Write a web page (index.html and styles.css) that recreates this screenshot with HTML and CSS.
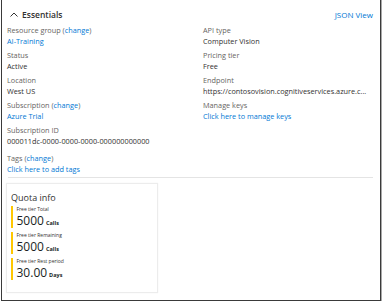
FILE: index.html
```html
<!DOCTYPE html>
<html>
<head>
<meta charset="utf-8">
<link rel="stylesheet" href="styles.css">
</head>
<body>
<div class="frame">
  <div class="header">
    <div class="title">
      <svg class="chev" width="8" height="5" viewBox="0 0 8 5"><path d="M0.5 4.5 L4 1 L7.5 4.5" fill="none" stroke="#333" stroke-width="1"/></svg>
      <span>Essentials</span>
    </div>
    <a class="link">JSON View</a>
  </div>
  <div class="grid">
    <div class="col">
      <div class="item"><div class="label">Resource group (<a class="link">change</a>)</div><div class="value"><a class="link">AI-Training</a></div></div>
      <div class="item"><div class="label">Status</div><div class="value">Active</div></div>
      <div class="item"><div class="label">Location</div><div class="value">West US</div></div>
      <div class="item"><div class="label">Subscription (<a class="link">change</a>)</div><div class="value"><a class="link">Azure Trial</a></div></div>
      <div class="item"><div class="label">Subscription ID</div><div class="value">000011dc-0000-0000-0000-000000000000</div></div>
    </div>
    <div class="col">
      <div class="item"><div class="label">API type</div><div class="value">Computer Vision</div></div>
      <div class="item"><div class="label">Pricing tier</div><div class="value">Free</div></div>
      <div class="item"><div class="label">Endpoint</div><div class="value">https://contosovision.cognitiveservices.azure.c...</div></div>
      <div class="item"><div class="label">Manage keys</div><div class="value"><a class="link">Click here to manage keys</a></div></div>
    </div>
  </div>
  <div class="item tags"><div class="label">Tags (<a class="link">change</a>)</div><div class="value"><a class="link">Click here to add tags</a></div></div>
  <div class="sep"></div>
  <div class="card">
    <div class="card-title">Quota info</div>
    <div class="quota">
      <div class="q"><div class="qlabel">Free tier Total</div><div class="qval"><span class="num">5000</span><span class="unit">Calls</span></div></div>
      <div class="q"><div class="qlabel">Free tier Remaining</div><div class="qval"><span class="num">5000</span><span class="unit">Calls</span></div></div>
      <div class="q"><div class="qlabel">Free tier Rest period</div><div class="qval"><span class="num">30.00</span><span class="unit">Days</span></div></div>
    </div>
  </div>
</div>
</body>
</html>
```
FILE: styles.css
```css
* { box-sizing: border-box; }
html, body { margin: 0; padding: 0; background: #fff; }
body { font-family: "Open Sans", "Noto Sans", sans-serif; color: #323130; }
.frame {
  margin-left: 1px;
  width: 380px;
  height: 301px;
  border: 1.5px solid #3a3a3a;
  border-top: none;
  box-shadow: 1px 1px 0 1px #a8a8a8;
  padding: 8px 6px 0 5px;
}
.header { display: flex; justify-content: space-between; align-items: center; height: 12px; font-size: 8px; }
.title { display: flex; align-items: center; gap: 4px; padding-left: 3px; font-weight: 600; font-size: 8.5px; }
.header .link { margin-right: 1px; }
.link { color: #0078d4; text-decoration: none; }
.grid { display: grid; grid-template-columns: 196px 1fr; margin-top: 5px; }
.col { display: flex; flex-direction: column; gap: 4px; }
.item { font-size: 7.3px; line-height: 10.5px; }
.label { color: #666462; }
.value { color: #323130; white-space: nowrap; }
.tags { margin-top: 7px; }
.sep { height: 1px; background: #e4e4e4; margin: 3px 1px 0 1px; }
.card {
  margin-top: 5px;
  width: 152px;
  height: 110px;
  border: 1px solid #ececec;
  box-shadow: 0 0 1px rgba(0,0,0,0.08);
  padding: 8px 4px 0 4px;
  margin-left: -1px;
}
.card-title { font-size: 9px; line-height: 12px; color: #323130; }
.quota { display: flex; flex-direction: column; gap: 4px; margin-top: 2px; }
.q { border-left: 2.5px solid #ffc700; padding-left: 3.5px; height: 22px; }
.qlabel { font-size: 5px; line-height: 7px; color: #323130; }
.qval { display: flex; align-items: baseline; gap: 2px; height: 15px; line-height: 15px; color: #201f1e; }
.num { font-size: 12px; }
.unit { font-size: 5.5px; font-weight: 700; }
```
